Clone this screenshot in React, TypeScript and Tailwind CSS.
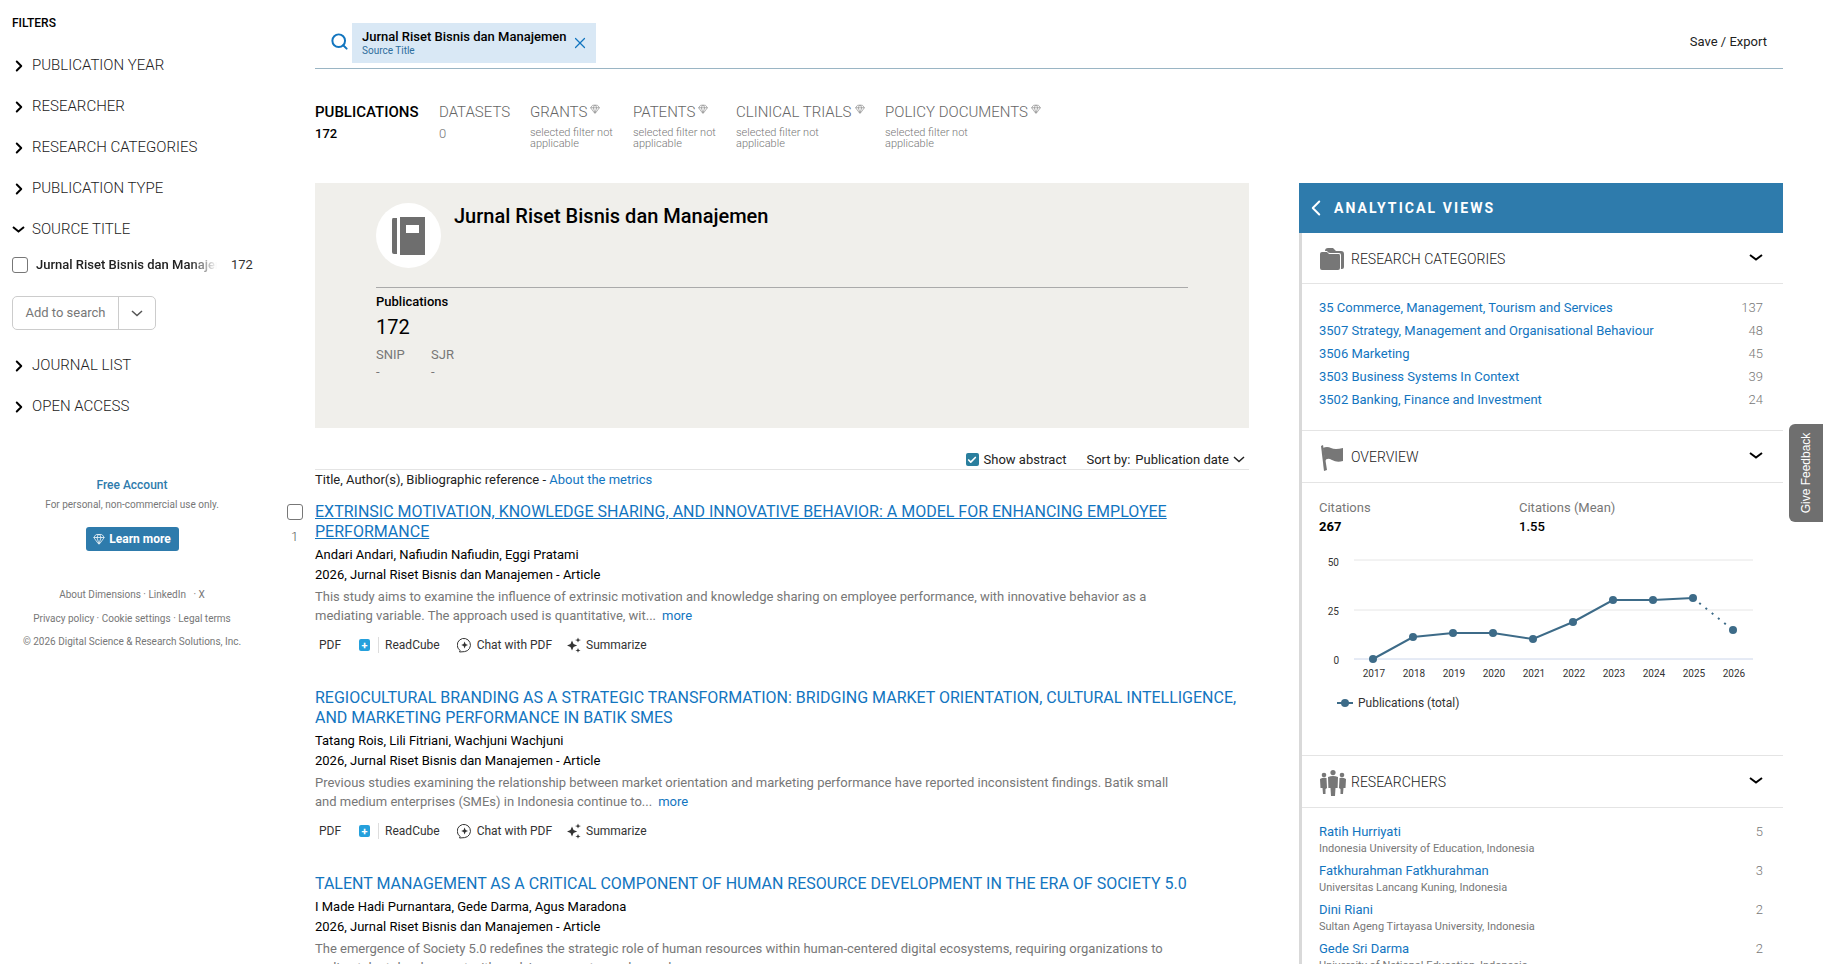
import React from 'react';
import { ChevronRight, ChevronLeft, Search, X, Gem, Check } from 'lucide-react';

const filters1 = ['PUBLICATION YEAR', 'RESEARCHER', 'RESEARCH CATEGORIES', 'PUBLICATION TYPE'];
const filters2 = ['JOURNAL LIST', 'OPEN ACCESS'];

const tabs = [
  { name: 'DATASETS', x: 'w-[91px]', count: '0' },
  { name: 'GRANTS', x: 'w-[103px]', gem: true },
  { name: 'PATENTS', x: 'w-[103px]', gem: true },
  { name: 'CLINICAL TRIALS', x: 'w-[149px]', gem: true },
  { name: 'POLICY DOCUMENTS', x: 'w-[160px]', gem: true },
];

const categories = [
  ['35 Commerce, Management, Tourism and Services', '137'],
  ['3507 Strategy, Management and Organisational Behaviour', '48'],
  ['3506 Marketing', '45'],
  ['3503 Business Systems In Context', '39'],
  ['3502 Banking, Finance and Investment', '24'],
];

const researchers = [
  ['Ratih Hurriyati', 'Indonesia University of Education, Indonesia', '5'],
  ['Fatkhurahman Fatkhurahman', 'Universitas Lancang Kuning, Indonesia', '3'],
  ['Dini Riani', 'Sultan Ageng Tirtayasa University, Indonesia', '2'],
  ['Gede Sri Darma', 'University of National Education, Indonesia', '2'],
];

const pts = [659, 637, 633, 633, 639, 622, 600, 600, 598, 630];

const Caret = ({ w = 14, sw = 2, className = '' }: { w?: number; sw?: number; className?: string }) => (
  <svg width={w} height="7" viewBox={`0 0 ${w} 7`} fill="none" className={className}>
    <path d={`M1 1 L${w / 2} 5.5 L${w - 1} 1`} stroke="currentColor" strokeWidth={sw} />
  </svg>
);

const BookIcon = () => (
  <svg width="34" height="38" viewBox="0 0 34 38">
    <path d="M5 1 H1 Q0 1 0 3 V35 Q0 37 2 37 H5 Z" fill="#6e6e6e" />
    <rect x="8" y="0" width="25" height="38" fill="#6e6e6e" />
    <rect x="14" y="8" width="13" height="8" fill="#fff" />
  </svg>
);

const FolderIcon = () => (
  <svg width="24" height="22" viewBox="0 0 24 22">
    <path d="M5 3 Q5 0 8 0 H13 L16 3 H21 Q24 3 24 6 V19 Q24 21 22 21 L21 21 V7 Q21 5 19 5 H10 Q8 5 7 3 Z" fill="#777" />
    <path d="M0 6 Q0 4 2 4 H7 L9 6 H19 Q20 6 20 8 V20 Q20 22 18 22 H2 Q0 22 0 20 Z" fill="#777" />
  </svg>
);

const FlagIcon = () => (
  <svg width="24" height="26" viewBox="0 0 24 26">
    <path d="M1 1 L3 0 L7 25 L4 26 Z" fill="#777" />
    <path d="M3 3 Q7 1 11 3 T23 3 V16 Q17 18 12 15 T5 16 Z" fill="#777" />
  </svg>
);

const PeopleIcon = () => (
  <svg width="26" height="26" viewBox="0 0 26 26">
    <g fill="#777">
      <circle cx="13" cy="2.6" r="2.6" />
      <circle cx="4" cy="5" r="2.3" />
      <circle cx="22" cy="5" r="2.3" />
      <path d="M8 7 Q13 5 18 7 L17.6 18 L15.5 18 L15 26 H11 L10.5 18 L8.4 18 Z" />
      <path d="M0 9 Q3 7 6.5 8 L7 18 L5.5 19 L5.5 24 H3 L2.5 18 L0.5 18 Z" />
      <path d="M26 9 Q23 7 19.5 8 L19 18 L20.5 19 L20.5 24 H23 L23.5 18 L25.5 18 Z" />
    </g>
  </svg>
);

const ChatIcon = () => (
  <svg width="15" height="16" viewBox="0 0 15 16" fill="none">
    <path d="M3 13.4 A6.6 6.6 0 1 1 7.6 14.6 L2.6 15 Z" stroke="#333" strokeWidth="1" strokeLinejoin="round" />
    <path d="M7.6 4.4 L8.6 7 L11 8 L8.6 9 L7.6 11.6 L6.6 9 L4.2 8 L6.6 7 Z" fill="#333" />
  </svg>
);

const SparkIcon = () => (
  <svg width="14" height="16" viewBox="0 0 14 16" fill="#333">
    <path d="M5 3.5 L6.5 7 L10.2 8.5 L6.5 10 L5 13.5 L3.5 10 L0 8.5 L3.5 7 Z" />
    <path d="M11 0.5 L11.8 2.4 L14 3 L11.8 3.7 L11 5.6 L10.2 3.7 L8 3 L10.2 2.4 Z" />
    <path d="M11 11 L11.7 12.7 L13.6 13.4 L11.7 14 L11 15.8 L10.3 14 L8.4 13.4 L10.3 12.7 Z" />
  </svg>
);

const FilterRow = ({ label }: { label: string }) => (
  <div className="flex items-center h-[41px] text-[15px] font-light text-[#222]">
    <ChevronRight size={18} strokeWidth={2.6} className="text-black mr-[4px] -ml-[2px]" />
    {label}
  </div>
);

const Sidebar = () => (
  <aside className="w-[287px] shrink-0 pl-3 pt-[16px]">
    <div className="text-[12px] leading-[14px] font-medium text-black">FILTERS</div>
    <div className="mt-[15px]">
      {filters1.map(f => (
        <FilterRow key={f} label={f} />
      ))}
      <div className="flex items-center h-[41px] text-[15px] font-light text-[#222]">
        <Caret w={13} className="text-black mr-[7px]" />
        SOURCE TITLE
      </div>
      <div className="-mt-[1px] flex items-center h-[32px] w-[260px]">
        <span className="w-4 h-4 border border-[#777] rounded-[3px] bg-white shrink-0" />
        <span className="ml-2 w-[181px] text-[13px] font-medium text-[#222] whitespace-nowrap overflow-hidden [mask-image:linear-gradient(to_right,black_85%,transparent)]">Jurnal Riset Bisnis dan Manajemen</span>
        <span className="ml-[14px] text-[13px] text-[#333]">172</span>
      </div>
      <div className="mt-[15px] mb-[15px] flex h-[34px] w-[144px] border border-[#ccc] rounded-[5px] text-[13px] text-[#777]">
        <div className="w-[106px] flex items-center justify-center border-r border-[#ccc]">Add to search</div>
        <div className="flex-1 flex items-center justify-center"><Caret w={12} sw={1.5} className="text-[#555]" /></div>
      </div>
      {filters2.map(f => (
        <FilterRow key={f} label={f} />
      ))}
    </div>
    <div className="mt-[50px] w-[240px] flex flex-col items-center">
      <div className="text-[12px] leading-[16px] font-medium text-[#2e7bac]">Free Account</div>
      <div className="mt-[6px] text-[10px] leading-[12px] text-[#777]">For personal, non-commercial use only.</div>
      <div className="mt-[16px] h-[24px] w-[93px] rounded-[3px] bg-[#2e7bac] text-white flex items-center justify-center gap-[4px] text-[12px] font-bold">
        <Gem size={12} strokeWidth={1.5} />
        Learn more
      </div>
      <div className="mt-[38px] text-[10px] leading-[12px] text-[#777] whitespace-pre">About Dimensions · LinkedIn   · X</div>
      <div className="mt-[12px] text-[10px] leading-[12px] text-[#777]">Privacy policy · Cookie settings · Legal terms</div>
      <div className="mt-[11px] text-[10px] leading-[12px] text-[#777]">© 2026 Digital Science &amp; Research Solutions, Inc.</div>
    </div>
  </aside>
);

const Tabs = () => (
  <div className="flex pt-[33px] h-[114px]">
    <div className="w-[124px]">
      <div className="text-[15px] leading-[20px] font-medium text-black">PUBLICATIONS</div>
      <div className="mt-[2px] text-[13px] leading-[20px] font-medium text-black">172</div>
    </div>
    {tabs.map(t => (
      <div key={t.name} className={t.x}>
        <div className="flex text-[15px] leading-[20px] font-light text-[#666] whitespace-nowrap">
          {t.name}
          {t.gem && <Gem size={10} strokeWidth={1.6} className="ml-[3px] mt-[2px] text-[#888]" />}
        </div>
        {t.count ? (
          <div className="mt-[2px] text-[13px] leading-[20px] font-light text-[#777]">{t.count}</div>
        ) : (
          <div className="mt-[5px] text-[11px] leading-[11px] font-light text-[#777] w-[88px]">selected filter not applicable</div>
        )}
      </div>
    ))}
  </div>
);

const SourceCard = () => (
  <div className="h-[245px] bg-[#f0efeb] pl-[61px] pr-[61px] pt-[20px]">
    <div className="flex h-[85px] border-b border-[#aaa]">
      <div className="w-[65px] h-[65px] rounded-full bg-white flex items-center justify-center"><BookIcon /></div>
      <div className="ml-[13px] text-[20px] leading-[26px] font-medium text-black">Jurnal Riset Bisnis dan Manajemen</div>
    </div>
    <div className="mt-[6px] text-[13px] leading-[16px] font-medium text-black">Publications</div>
    <div className="mt-[4px] text-[20px] leading-[26px] text-black">172</div>
    <div className="mt-[7px] flex text-[13px] text-[#777]">
      <div className="w-[55px]">
        <div className="leading-[16px]">SNIP</div>
        <div className="leading-[16px] mt-[1px]">-</div>
      </div>
      <div>
        <div className="leading-[16px]">SJR</div>
        <div className="leading-[16px] mt-[1px]">-</div>
      </div>
    </div>
  </div>
);

type Article = { title: string; underline?: boolean; authors: string; abstract: string[]; num?: string; actions?: boolean };

const articles: Article[] = [
  {
    title: 'EXTRINSIC MOTIVATION, KNOWLEDGE SHARING, AND INNOVATIVE BEHAVIOR: A MODEL FOR ENHANCING EMPLOYEE PERFORMANCE',
    underline: true,
    num: '1',
    authors: 'Andari Andari, Nafiudin Nafiudin, Eggi Pratami',
    abstract: ['This study aims to examine the influence of extrinsic motivation and knowledge sharing on employee performance, with innovative behavior as a', 'mediating variable. The approach used is quantitative, wit...'],
    actions: true,
  },
  {
    title: 'REGIOCULTURAL BRANDING AS A STRATEGIC TRANSFORMATION: BRIDGING MARKET ORIENTATION, CULTURAL INTELLIGENCE, AND MARKETING PERFORMANCE IN BATIK SMES',
    authors: 'Tatang Rois, Lili Fitriani, Wachjuni Wachjuni',
    abstract: ['Previous studies examining the relationship between market orientation and marketing performance have reported inconsistent findings. Batik small', 'and medium enterprises (SMEs) in Indonesia continue to...'],
    actions: true,
  },
  {
    title: 'TALENT MANAGEMENT AS A CRITICAL COMPONENT OF HUMAN RESOURCE DEVELOPMENT IN THE ERA OF SOCIETY 5.0',
    authors: 'I Made Hadi Purnantara, Gede Darma, Agus Maradona',
    abstract: ['The emergence of Society 5.0 redefines the strategic role of human resources within human-centered digital ecosystems, requiring organizations to', 'realign talent development with evolving competency demands...'],
  },
];

const ArticleRow = ({ a }: { a: Article }) => (
  <div className="flex -ml-[28px] mb-[33px]">
    <div className="w-[28px] shrink-0 pt-[2px]">
      {a.num && (
        <>
          <span className="block w-4 h-4 border border-[#777] rounded-[3px]" />
          <div className="mt-[9px] ml-[4px] text-[13px] leading-[16px] font-light text-[#555]">{a.num}</div>
        </>
      )}
    </div>
    <div className="flex-1">
      <div className={`text-[16px] leading-[20px] text-[#1275bf] ${a.underline ? 'underline w-[880px]' : ''}`}>{a.title}</div>
      <div className="mt-[3px] text-[13px] leading-[20px] text-black">{a.authors}</div>
      <div className="text-[13px] leading-[20px] text-black">2026, Jurnal Riset Bisnis dan Manajemen - Article</div>
      <div className="mt-[2px] w-[880px] text-[13px] leading-[19px] text-[#777]">
        {a.abstract.map((l, i) => (
          <div key={i} className="whitespace-nowrap">
            {l}
            {i === 1 && <span className="ml-[6px] text-[#1275bf]">more</span>}
          </div>
        ))}
      </div>
      {a.actions && (
        <div className="mt-[10px] h-[20px] flex items-center text-[12px] text-[#333]">
          <span className="ml-[4px]">PDF</span>
          <span className="ml-[18px] w-[11px] h-[12px] rounded-[2px] bg-[#25a0dc] text-white flex items-center justify-center text-[11px] leading-none font-bold">+</span>
          <span className="ml-[8px] h-[16px] border-l border-[#ddd]" />
          <span className="ml-[6px]">ReadCube</span>
          <span className="ml-[17px]"><ChatIcon /></span>
          <span className="ml-[5px]">Chat with PDF</span>
          <span className="ml-[15px]"><SparkIcon /></span>
          <span className="ml-[5px]">Summarize</span>
        </div>
      )}
    </div>
  </div>
);

const PanelHead = ({ icon, label, h }: { icon: React.ReactNode; label: string; h: string }) => (
  <div className={`flex items-center justify-between pt-[2px] pl-[18px] pr-[20px] border-b border-[#e4e4e4] ${h}`}>
    <div className="flex items-center">
      <span className="w-[31px] flex">{icon}</span>
      <span className="text-[14px] font-light text-[#222]">{label}</span>
    </div>
    <Caret className="text-black -mt-[4px]" />
  </div>
);

const Chart = () => {
  const px = (i: number) => 1373 + i * 40 - 1302;
  const py = (y: number) => y - 545;
  const solid = pts.slice(0, 9).map((y, i) => `${px(i)},${py(y)}`).join(' ');
  return (
    <svg width="481" height="175" className="block mt-[8px]" fontFamily="Roboto, sans-serif">
      {[560, 610].map(y => <line key={y} x1="52" x2="451" y1={py(y)} y2={py(y)} stroke="#e6e6e6" />)}
      <line x1="52" x2="451" y1={py(659)} y2={py(659)} stroke="#ccd6eb" />
      {[['50', 566], ['25', 615], ['0', 664]].map(([l, y]) => (
        <text key={l} x="37" y={py(y as number)} textAnchor="end" fontSize="10" fill="#333">{l}</text>
      ))}
      {pts.map((_, i) => (
        <text key={i} x={px(i) + 1} y="132" textAnchor="middle" fontSize="10" fill="#333">{2017 + i}</text>
      ))}
      <polyline points={solid} fill="none" stroke="#3d6b88" strokeWidth="2" />
      <line x1={px(8)} y1={py(pts[8])} x2={px(9)} y2={py(pts[9])} stroke="#3d6b88" strokeWidth="2" strokeDasharray="2 6" />
      {pts.map((y, i) => <circle key={i} cx={px(i)} cy={py(y)} r="4" fill="#3d6b88" />)}
      <line x1="35" x2="51" y1="158" y2="158" stroke="#3d6b88" strokeWidth="2" />
      <circle cx="43" cy="158" r="4" fill="#3d6b88" />
      <text x="56" y="162" fontSize="12" fill="#333">Publications (total)</text>
    </svg>
  );
};

const Panel = () => (
  <div className="w-[484px] shrink-0 h-[781px] flex flex-col overflow-hidden">
    <div className="h-[50px] shrink-0 bg-[#2e7bac] text-white flex items-center pl-[4px]">
      <ChevronLeft size={26} strokeWidth={1.8} />
      <span className="ml-[5px] text-[14px] font-bold tracking-[2.1px]">ANALYTICAL VIEWS</span>
    </div>
    <div className="flex-1 border-l-[3px] border-[#d9d9d9]">
      <PanelHead icon={<FolderIcon />} label="RESEARCH CATEGORIES" h="h-[51px]" />
      <div className="pt-[12px] pl-[17px] pr-[20px] h-[147px] border-b border-[#e4e4e4]">
        {categories.map(([name, n]) => (
          <div key={name} className="flex justify-between h-[23px] items-center text-[13px]">
            <span className="text-[#1275bf]">{name}</span>
            <span className="font-light text-[#777]">{n}</span>
          </div>
        ))}
      </div>
      <PanelHead icon={<FlagIcon />} label="OVERVIEW" h="h-[52px]" />
      <div className="h-[273px] border-b border-[#e4e4e4] pt-[16px] pl-[17px]">
        <div className="flex text-[13px]">
          <div className="w-[200px]">
            <div className="leading-[18px] text-[#777]">Citations</div>
            <div className="leading-[20px] font-bold text-black">267</div>
          </div>
          <div>
            <div className="leading-[18px] text-[#777]">Citations (Mean)</div>
            <div className="leading-[20px] font-medium text-black">1.55</div>
          </div>
        </div>
        <div className="-ml-[17px]"><Chart /></div>
      </div>
      <PanelHead icon={<PeopleIcon />} label="RESEARCHERS" h="h-[52px]" />
      <div className="pt-[14px] pl-[17px] pr-[20px]">
        {researchers.map(([name, aff, n]) => (
          <div key={name} className="flex justify-between h-[39px]">
            <div>
              <div className="text-[13px] leading-[20px] text-[#1275bf]">{name}</div>
              <div className="text-[11px] leading-[13px] text-[#777]">{aff}</div>
            </div>
            <span className="text-[13px] leading-[20px] font-light text-[#777]">{n}</span>
          </div>
        ))}
      </div>
    </div>
  </div>
);

export default function App() {
  return (
    <div className="relative flex h-[964px] overflow-hidden bg-white font-['Roboto',sans-serif]">
      <Sidebar />
      <main className="flex-1 min-w-0 pl-[28px] pr-[40px]">
        <div className="h-[69px] border-b border-[#9ab5c4] flex justify-between pt-[23px]">
          <div className="flex h-[40px] pl-[15px]">
            <Search size={19} strokeWidth={2.5} className="text-[#1275bf] mt-[9px] mr-[3px]" />
            <div className="bg-[#d9e8f5] w-[244px] pl-[10px] pr-[7px] flex items-center justify-between">
              <div>
                <div className="text-[13px] leading-[16px] font-medium text-black">Jurnal Riset Bisnis dan Manajemen</div>
                <div className="text-[10px] leading-[12px] text-[#2e6e9c]">Source Title</div>
              </div>
              <X size={18} strokeWidth={1.6} className="text-[#1275bf]" />
            </div>
          </div>
          <div className="pt-[10px] pr-[16px] text-[13px] leading-[18px] text-[#222]">Save / Export</div>
        </div>
        <Tabs />
        <div className="flex gap-[50px]">
          <div className="w-[934px] shrink-0">
            <SourceCard />
            <div className="mt-[22px] h-[20px] border-b border-[#e4e4e4] flex justify-end items-center pr-[4px] text-[13px] text-[#222]">
              <span className="w-[13px] h-[13px] rounded-[2px] bg-[#2a7f9e] text-white flex items-center justify-center">
                <Check size={10} strokeWidth={4} />
              </span>
              <span className="ml-[5px]">Show abstract</span>
              <span className="ml-[20px]">Sort by:</span>
              <span className="ml-[5px]">Publication date</span>
              <Caret w={12} sw={1.5} className="ml-[4px]" />
            </div>
            <div className="mt-[1px] text-[13px] leading-[18px] text-[#222]">
              Title, Author(s), Bibliographic reference - <span className="text-[#1275bf]">About the metrics</span>
            </div>
            <div className="mt-[13px]">
              {articles.map(a => <ArticleRow key={a.title} a={a} />)}
            </div>
          </div>
          <Panel />
        </div>
      </main>
      <div className="absolute right-0 top-[424px] w-[34px] h-[98px] rounded-l-[6px] bg-[#6f6f6f] text-white flex items-center justify-center">
        <span className="-rotate-90 whitespace-nowrap text-[12px] font-medium font-['Liberation_Sans',sans-serif]">Give Feedback</span>
      </div>
    </div>
  );
}
